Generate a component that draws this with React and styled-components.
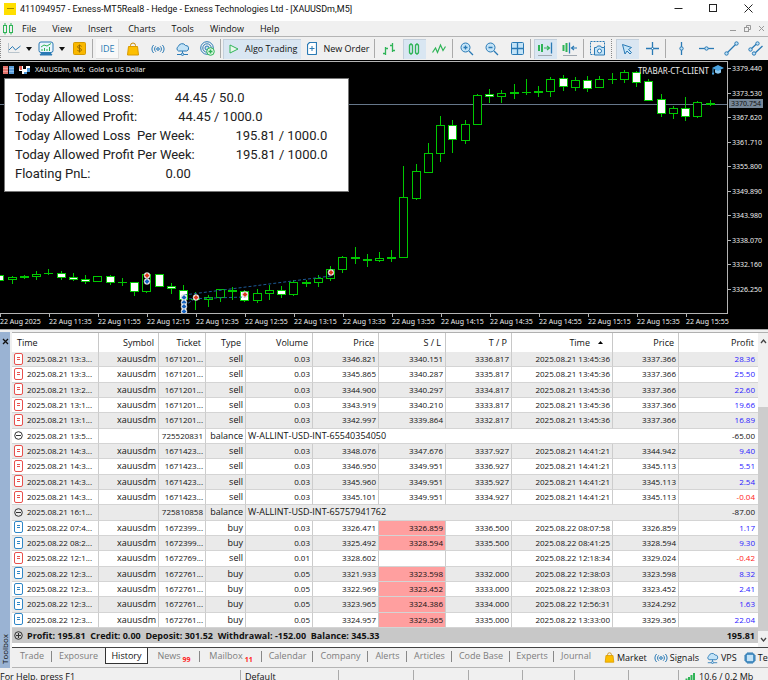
import styled, { createGlobalStyle, css } from "styled-components";

const BLUE = "#2a7ab5";
const LIGHT = "#c3e3f7";
const GREEN = "#2fb457";

const menus = ["File", "View", "Insert", "Charts", "Tools", "Window", "Help"];

// wick top, body top, body bottom, wick bottom, w = filled / g = hollow
const candles = [
  [275, 275, 280, 280, "w"],
  [276, 277, 279, 283, "g"],
  [275, 276, 277, 278, "g"],
  [271, 274, 276, 279, "g"],
  [269, 273, 273, 274, "g"],
  [271, 273, 277, 279, "w"],
  [273, 277, 279, 280, "w"],
  [275, 279, 281, 283, "w"],
  [276, 276, 281, 281, "g"],
  [275, 276, 282, 284, "w"],
  [278, 282, 282, 285, "g"],
  [282, 282, 291, 295, "w"],
  [274, 274, 291, 292, "g"],
  [274, 274, 286, 286, "w"],
  [283, 286, 288, 293, "w"],
  [285, 290, 299, 299, "w"],
  [292, 299, 299, 309, "g"],
  [295, 297, 299, 306, "g"],
  [289, 289, 297, 301, "g"],
  [287, 290, 291, 299, "w"],
  [290, 291, 300, 301, "w"],
  [289, 293, 300, 302, "g"],
  [285, 290, 293, 299, "g"],
  [286, 290, 294, 297, "w"],
  [280, 282, 294, 295, "g"],
  [280, 282, 283, 286, "g"],
  [275, 278, 282, 286, "g"],
  [266, 269, 278, 280, "g"],
  [256, 257, 269, 272, "g"],
  [247, 257, 258, 263, "w"],
  [254, 259, 260, 266, "w"],
  [252, 258, 260, 261, "g"],
  [250, 257, 258, 261, "g"],
  [166, 197, 257, 257, "g"],
  [164, 171, 198, 199, "g"],
  [143, 153, 172, 172, "g"],
  [116, 125, 153, 161, "g"],
  [120, 125, 139, 152, "w"],
  [120, 124, 140, 143, "g"],
  [94, 95, 124, 124, "g"],
  [89, 94, 96, 102, "w"],
  [90, 93, 96, 102, "g"],
  [84, 92, 93, 98, "g"],
  [79, 92, 92, 94, "g"],
  [86, 91, 92, 96, "g"],
  [77, 79, 91, 96, "g"],
  [75, 78, 86, 90, "w"],
  [77, 80, 87, 90, "g"],
  [76, 80, 88, 91, "w"],
  [76, 79, 87, 87, "g"],
  [73, 79, 79, 83, "g"],
  [70, 72, 79, 82, "g"],
  [71, 72, 82, 86, "w"],
  [79, 81, 100, 100, "w"],
  [94, 99, 113, 116, "w"],
  [106, 108, 113, 118, "g"],
  [97, 108, 116, 120, "w"],
  [101, 102, 116, 117, "g"],
  [100, 103, 104, 105, "w"],
];

const trades = [
  [147, 275, "#d8381c"],
  [147, 281, "#1560bd"],
  [184, 297, "#1560bd"],
  [184, 302, "#1560bd"],
  [184, 306, "#1560bd"],
  [184, 311, "#1560bd"],
  [196, 297, "#d8381c"],
  [245, 294, "#d8381c"],
  [331, 272, "#d8381c"],
];

const prices = [
  "3379.440",
  "3373.530",
  "3367.620",
  "3361.710",
  "3355.800",
  "3349.890",
  "3343.980",
  "3338.070",
  "3332.160",
  "3326.250",
];

const times = [
  "2025",
  "11:35",
  "11:55",
  "12:15",
  "12:35",
  "12:55",
  "13:15",
  "13:35",
  "13:55",
  "14:15",
  "14:35",
  "14:55",
  "15:15",
  "15:35",
  "15:55",
];

const limits = [
  ["Today Allowed Loss:", "44.45 / 50.0"],
  ["Today Allowed Profit:", "44.45 / 1000.0"],
  ["Today Allowed Loss\u00a0 Per Week:", "195.81 / 1000.0"],
  ["Today Allowed Profit Per Week:", "195.81 / 1000.0"],
  ["Floating PnL:", "0.00"],
];

const deals = [
  ["2025.08.21 13:3...", "1671201...", "sell", "0.03", "3346.821", "3340.151", "3336.817", "2025.08.21 13:45:36", "3337.366", "28.36"],
  ["2025.08.21 13:3...", "1671201...", "sell", "0.03", "3345.865", "3340.287", "3335.817", "2025.08.21 13:45:36", "3337.366", "25.50"],
  ["2025.08.21 13:2...", "1671201...", "sell", "0.03", "3344.900", "3340.297", "3334.817", "2025.08.21 13:45:36", "3337.366", "22.60"],
  ["2025.08.21 13:1...", "1671201...", "sell", "0.03", "3343.919", "3340.210", "3333.817", "2025.08.21 13:45:36", "3337.366", "19.66"],
  ["2025.08.21 13:1...", "1671201...", "sell", "0.03", "3342.997", "3339.864", "3332.817", "2025.08.21 13:45:36", "3337.366", "16.89"],
  ["2025.08.21 13:5...", "725520831", "balance", "W-ALLINT-USD-INT-65540354050", "-65.00"],
  ["2025.08.21 14:3...", "1671423...", "sell", "0.03", "3348.076", "3347.676", "3337.927", "2025.08.21 14:41:21", "3344.942", "9.40"],
  ["2025.08.21 14:3...", "1671423...", "sell", "0.03", "3346.950", "3349.951", "3336.927", "2025.08.21 14:41:21", "3345.113", "5.51"],
  ["2025.08.21 14:3...", "1671423...", "sell", "0.03", "3345.960", "3349.951", "3335.927", "2025.08.21 14:41:21", "3345.113", "2.54"],
  ["2025.08.21 14:3...", "1671423...", "sell", "0.03", "3345.101", "3349.951", "3334.927", "2025.08.21 14:41:21", "3345.113", "-0.04"],
  ["2025.08.21 16:1...", "725810858", "balance", "W-ALLINT-USD-INT-65757941762", "-87.00"],
  ["2025.08.22 07:4...", "1672399...", "buy", "0.03", "3326.471", "3326.859", "3336.500", "2025.08.22 08:07:58", "3326.859", "1.17"],
  ["2025.08.22 08:2...", "1672399...", "buy", "0.03", "3325.492", "3328.594", "3335.500", "2025.08.22 08:41:25", "3328.594", "9.30"],
  ["2025.08.22 12:1...", "1672769...", "sell", "0.01", "3328.602", "", "", "2025.08.22 12:18:34", "3329.024", "-0.42"],
  ["2025.08.22 12:3...", "1672761...", "buy", "0.05", "3321.933", "3323.598", "3332.000", "2025.08.22 12:38:03", "3323.598", "8.32"],
  ["2025.08.22 12:3...", "1672761...", "buy", "0.05", "3322.969", "3323.452", "3333.000", "2025.08.22 12:38:03", "3323.452", "2.41"],
  ["2025.08.22 12:3...", "1672761...", "buy", "0.05", "3323.965", "3324.386", "3334.000", "2025.08.22 12:56:31", "3324.292", "1.63"],
  ["2025.08.22 12:3...", "1672761...", "buy", "0.05", "3324.957", "3329.365", "3335.000", "2025.08.22 13:33:00", "3329.365", "22.04"],
];

const columns = [
  ["Time", 87],
  ["Symbol", 60],
  ["Ticket", 47],
  ["Type", 40],
  ["Volume", 67],
  ["Price", 66],
  ["S / L", 67],
  ["T / P", 66],
  ["Time", 101],
  ["Price", 66],
  ["Profit", 79],
];

const tabs = [
  ["Trade"],
  ["Exposure"],
  ["History"],
  ["News", "99"],
  ["Mailbox", "11"],
  ["Calendar"],
  ["Company"],
  ["Alerts"],
  ["Articles"],
  ["Code Base"],
  ["Experts"],
  ["Journal"],
];

function Icon({ w = 16, h = 16, children, ...rest }) {
  return (
    <svg
      width={w}
      height={h}
      viewBox={`0 0 ${w} ${h}`}
      fill="none"
      stroke={BLUE}
      strokeWidth="1"
      aria-hidden="true"
      {...rest}
    >
      {children}
    </svg>
  );
}

const CandlesIcon = () => (
  <Icon w={12} h={14} stroke={GREEN}>
    <rect x="1.500" y="3.500" width="3" height="7" />
    <rect x="7.500" y="3.500" width="3" height="7" />
    <path d="M3 1v2.500M3 10.500v2M9 1v2.500M9 10.500v2" />
  </Icon>
);

const BagIcon = ({ size = 14 }) => (
  <svg width={size} height={size} viewBox="0 0 14 14" fill="none" aria-hidden="true">
    <path d="M4.500 6V3.500a2.500 2.500 0 0 1 5 0V6" stroke="#c98a00" />
    <path d="M2.500 4.500h9l1 8.500h-11z" fill="#fdbf00" stroke="#d99a00" />
  </svg>
);

const SignalIcon = () => (
  <Icon w={14} h={12}>
    <circle cx="7" cy="6" r="1.300" fill={LIGHT} />
    <path d="M4.800 3.300a3.600 3.600 0 0 0 0 5.400M9.200 3.300a3.600 3.600 0 0 1 0 5.400M2.600 2a5.600 5.600 0 0 0 0 8M11.400 2a5.600 5.600 0 0 1 0 8" />
  </Icon>
);

const CloudIcon = ({ w = 15, h = 14 }) => (
  <svg width={w} height={h} viewBox="0 0 15 14" fill="none" stroke={BLUE} aria-hidden="true">
    <path d="M3.500 9A2.500 2.500 0 0 1 3.300 4.500 4 4 0 0 1 10.500 3.500 2.800 2.800 0 0 1 11.500 9z" fill={LIGHT} />
    <path d="M7.500 9v2M2 12.500h4M9 12.500h4" />
    <circle cx="7.500" cy="12.300" r="1.200" fill={LIGHT} />
  </svg>
);

const ChipIcon = () => (
  <Icon w={12} h={12}>
    <path d="M4 0v12M6 0v12M8 0v12M0 4h12M0 6h12M0 8h12" />
    <rect x="2" y="2" width="8" height="8" rx="1" fill={LIGHT} strokeWidth="1.500" />
  </Icon>
);

const DocIcon = ({ color }) => (
  <svg width="9" height="13" viewBox="0 0 9 13" fill="#fff" stroke={color} aria-hidden="true">
    <rect x="0.500" y="0.500" width="8" height="11" rx="1.500" />
    <path d="M3 4.500h3M3 6.500h3" />
  </svg>
);

const RoundIcon = ({ plus }) => (
  <svg width="9" height="9" viewBox="0 0 9 9" fill="none" stroke="#333" aria-hidden="true">
    <circle cx="4.500" cy="4.500" r="3.800" />
    <path d={plus ? "M2 4.500h5M4.500 2v5" : "M2 4.500h5"} />
  </svg>
);

const Caret = () => (
  <svg width="6" height="4" viewBox="0 0 6 4" aria-hidden="true">
    <path d="M0 0h6L3 4z" fill="#111" />
  </svg>
);

function Candle({ x, wickTop, top, bottom, wickBottom, filled }) {
  return (
    <g stroke="#00c800" shapeRendering="crispEdges">
      <path d={`M${x + 0.5} ${wickTop}V${wickBottom + 1}`} />
      {top === bottom ? (
        <path d={`M${x - 4} ${top + 0.5}h9`} />
      ) : (
        <rect
          x={x - 3.5}
          y={top + 0.5}
          width="8"
          height={bottom - top}
          fill={filled ? "#fff" : "#000"}
        />
      )}
    </g>
  );
}

function Chart() {
  return (
    <ChartBox>
      <Plot>
        <PlotDrawing viewBox="0 62 727 251" preserveAspectRatio="xMaxYMin slice">
          <path d="M0 104.500h727" stroke="#66778a" />
          {candles.map(([wickTop, top, bottom, wickBottom, kind], i) => (
            <Candle
              key={i}
              x={Math.round(i * 12.245 - 0.6)}
              wickTop={wickTop}
              top={top}
              bottom={bottom}
              wickBottom={wickBottom}
              filled={kind === "w"}
            />
          ))}
          <g stroke="#1d5a96" strokeDasharray="3 2" fill="none">
            <path d="M184 295L331 276M184 299L245 297M184 306L196 298" />
          </g>
          {trades.map(([x, y, color], i) => (
            <g key={i}>
              <circle cx={x} cy={y + 0.5} r="3" fill="#fff" stroke="#bbb" strokeWidth="0.500" />
              <path d={`M${x} ${y - 2}l2.500 2.500-2.500 2.500-2.500-2.500z`} fill={color} />
            </g>
          ))}
        </PlotDrawing>
        <ChartTitle>
          <svg width="11" height="8" viewBox="0 0 11 8" aria-hidden="true">
            <path d="M0 0h5v8H0z" fill="#f0a09a" />
            <path d="M6 0h5v8H6z" fill="#8cc0ee" />
            <path d="M0 1h5M0 4h5M0 7h5" stroke="#d8453c" />
            <path d="M6 1h5M6 4h5M6 7h5" stroke="#2f7fc8" />
          </svg>
          <svg width="11" height="8" viewBox="0 0 11 8" aria-hidden="true">
            <path d="M0 0h4v3h3V0h4v5H8v3H3V5H0z" fill="#fff" />
            <path d="M0 0h3v4H1z" fill="#e05a50" />
            <path d="M8 2h3v4H8v2H5V6h3z" fill="#4a96d8" />
          </svg>
          <span>XAUUSDm, M5:&nbsp; Gold vs US Dollar</span>
        </ChartTitle>
        <Expert>
          TRABAR-CT-CLIENT
          <svg width="12" height="10" viewBox="0 0 12 10" aria-hidden="true">
            <path d="M3 4.500v3c1.500 1.500 4.500 1.500 6 0v-3z" fill="#8cc8f0" />
            <path d="M6 0l6 3-6 3-6-3z" fill="#4aa3e0" />
            <path d="M1 3.500v4" stroke="#4aa3e0" />
            <circle cx="1" cy="8.500" r="1.200" fill="#4aa3e0" />
          </svg>
        </Expert>
        <Limits>
          {limits.map(([label, value]) => (
            <Limit key={label} $wide={value === "0.00"}>
              <dt>{label}</dt>
              <dd>{value}</dd>
            </Limit>
          ))}
        </Limits>
      </Plot>
      <PriceAxis>
        {prices.map((p) => (
          <Price key={p}>{p}</Price>
        ))}
        <CurrentPrice>3370.754</CurrentPrice>
      </PriceAxis>
      <TimeAxis>
        {times.map((t) => (
          <Tick key={t}>22 Aug {t}</Tick>
        ))}
      </TimeAxis>
    </ChartBox>
  );
}

function DealRow({ deal }) {
  const [opened, ticket, type] = deal;
  const profit = deal[deal.length - 1];
  const balance = type === "balance";
  const middle = balance ? [] : deal.slice(3, 9);

  return (
    <Row>
      <Cell $first>
        <Opened>
          {balance ? <RoundIcon /> : <DocIcon color={type === "buy" ? "#2f86c6" : "#e8504c"} />}
          {opened}
        </Opened>
      </Cell>
      <Cell $text>{balance ? "" : "xauusdm"}</Cell>
      <Cell>{ticket}</Cell>
      <Cell $text>{type}</Cell>
      {balance && (
        <Cell $note colSpan={6}>
          {deal[3]}
        </Cell>
      )}
      {middle.map((value, i) => (
        <Cell key={i} $hit={i === 2 && type === "buy"}>
          {value}
        </Cell>
      ))}
      <Cell $last $color={balance ? "#111" : profit.startsWith("-") ? "#ff1a1a" : "#2a20ff"}>
        {profit}
      </Cell>
    </Row>
  );
}

export default function App() {
  return (
    <Terminal>
      <GlobalStyle />
      <TitleBar>
        <Logo>
          <i />
        </Logo>
        <Title>411094957 - Exness-MT5Real8 - Hedge - Exness Technologies Ltd - [XAUUSDm,M5]</Title>
        <WindowButton aria-label="Minimize">
          <Icon w={9} h={9} stroke="#222">
            <path d="M0.500 4.500h8" />
          </Icon>
        </WindowButton>
        <WindowButton aria-label="Maximize">
          <Icon w={9} h={9} stroke="#222">
            <rect x="0.500" y="0.500" width="7" height="7" />
          </Icon>
        </WindowButton>
        <WindowButton aria-label="Close">
          <Icon w={9} h={9} stroke="#222">
            <path d="M0.500 0.500l8 8M8.500 0.500l-8 8" />
          </Icon>
        </WindowButton>
      </TitleBar>

      <MenuBar>
        <CandlesIcon />
        <Menus>
          {menus.map((m) => (
            <Menu key={m}>{m}</Menu>
          ))}
        </Menus>
        <ChildButton aria-label="Minimize chart">
          <Icon w={7} h={7} stroke="#999">
            <path d="M0 5.500h6" />
          </Icon>
        </ChildButton>
        <ChildButton aria-label="Restore chart">
          <Icon w={7} h={7} stroke="#999">
            <rect x="0.500" y="2.500" width="4" height="4" />
            <path d="M2.500 2V0.500h4v4H5" />
          </Icon>
        </ChildButton>
        <ChildButton aria-label="Close chart">
          <Icon w={7} h={7} stroke="#999">
            <path d="M1 1l5 5M6 1l-5 5" />
          </Icon>
        </ChildButton>
      </MenuBar>

      <ToolBar>
        <Divider $dotted />
        <Tool $drop aria-label="Chart type">
          <Icon w={14} h={12}>
            <path d="M1.500 0v9.500h11" stroke="#b9c4cc" />
            <path d="M2 7l3.500-3.500 3 3.500 5-4" />
          </Icon>
          <Caret />
        </Tool>
        <Tool $drop aria-label="Indicators">
          <Icon w={16} h={15}>
            <rect x="1" y="1" width="14" height="10.500" rx="2" fill="#eaf5fc" />
            <path d="M3 12.500h10l1 1.500H2z" fill={BLUE} />
            <path d="M3 6l3-2 3 1 4-2.500" stroke={GREEN} />
            <path d="M4 10V8M6.500 10V7M9 10V8M11.500 10V6" stroke={GREEN} />
          </Icon>
          <Caret />
        </Tool>
        <Tool aria-label="Depth of market">
          <svg width="13" height="13" viewBox="0 0 13 13" fill="none" aria-hidden="true">
            <rect x="0.500" y="0.500" width="12" height="12" rx="1" fill="#f9b800" stroke="#d59a00" />
            <path d="M8.500 4.500c0-1-4-1.500-4 .4s4 1 4 3-4 1.500-4 .1M6.500 2.500v8" stroke="#9a6c00" />
          </svg>
        </Tool>
        <Divider />
        <Tool $raised>IDE</Tool>
        <Tool aria-label="Market">
          <BagIcon />
        </Tool>
        <Tool aria-label="Signals">
          <SignalIcon />
        </Tool>
        <Tool aria-label="VPS">
          <CloudIcon />
        </Tool>
        <Tool aria-label="Copy trading">
          <Icon w={15} h={15}>
            <circle cx="7" cy="7" r="6.300" />
            <circle cx="7" cy="7" r="4.200" />
            <circle cx="7" cy="7" r="2" fill={LIGHT} />
            <circle cx="10.500" cy="10.500" r="3.800" fill="#dff5e3" stroke={GREEN} />
            <path d="M10.500 8.500v4M8.500 10.500h4" stroke={GREEN} strokeWidth="1.400" />
          </Icon>
        </Tool>
        <Divider />
        <LabelTool $active>
          <Icon w={10} h={10} stroke={GREEN}>
            <path d="M1 1l8 4-8 4z" fill="#e8f8ec" />
          </Icon>
          Algo Trading
        </LabelTool>
        <LabelTool>
          <Icon w={10} h={13}>
            <path d="M2.500 0.500h7v11a1 1 0 0 1-1 1h-7a1 1 0 0 1-1-1v-9z" fill="#fff" strokeWidth="1.200" />
            <path d="M5 4v5M2.500 6.500h5" />
          </Icon>
          New Order
        </LabelTool>
        <Divider />
        <Tool aria-label="Bar chart">
          <Icon w={14} h={14} stroke={GREEN}>
            <path d="M3.500 5v8M1 11.500h2.500M3.500 6.500H6M10.500 1v9M8 3.500h2.500M10.500 8.500H13" strokeWidth="1.300" />
          </Icon>
        </Tool>
        <Tool $active aria-label="Candlesticks">
          <Icon w={12} h={14} stroke={GREEN}>
            <rect x="1.500" y="2.500" width="3" height="9" rx="1" strokeWidth="1.300" />
            <rect x="7.500" y="2.500" width="3" height="9" rx="1" strokeWidth="1.300" />
            <path d="M3 1v1.500M3 11.500V13M9 1v1.500M9 11.500V13" />
          </Icon>
        </Tool>
        <Tool aria-label="Line chart">
          <Icon w={14} h={12} stroke={GREEN}>
            <path d="M0.500 9.500l3-4.500 2 4.500L8.500 2l2.500 5.500 2.500-4" strokeWidth="1.200" />
          </Icon>
        </Tool>
        <Divider />
        <Tool aria-label="Zoom in">
          <Icon w={14} h={14}>
            <circle cx="5.500" cy="5.500" r="4.500" fill={LIGHT} />
            <path d="M9 9l4 4M3.500 5.500h4M5.500 3.500v4" strokeWidth="1.300" />
          </Icon>
        </Tool>
        <Tool aria-label="Zoom out">
          <Icon w={14} h={14}>
            <circle cx="5.500" cy="5.500" r="4.500" fill={LIGHT} />
            <path d="M9 9l4 4M3.500 5.500h4" strokeWidth="1.300" />
          </Icon>
        </Tool>
        <Tool aria-label="Tile windows">
          <Icon w={13} h={13}>
            <rect x="0.500" y="0.500" width="12" height="12" rx="1" fill={LIGHT} />
            <path d="M6.500 0.500v12M0.500 6.500h12" strokeWidth="1.300" />
          </Icon>
        </Tool>
        <Divider />
        <Tool $active aria-label="Auto scroll">
          <Icon w={16} h={14}>
            <path d="M2 3v6M5 2v8" stroke={GREEN} strokeWidth="2" />
            <path d="M7 6h5M10 4l2.500 2L10 8" stroke={GREEN} strokeWidth="1.200" />
            <path d="M14.500 0.500v11" strokeWidth="1.300" />
            <path d="M1 13.500h14" stroke="#a0a8b0" />
          </Icon>
        </Tool>
        <Tool aria-label="Chart shift">
          <Icon w={16} h={14}>
            <path d="M1.500 3v6M4.500 1v9" stroke={GREEN} strokeWidth="2" />
            <path d="M7.500 0.500v11" strokeWidth="1.300" />
            <path d="M10 6h5M12 4L9.500 6 12 8" strokeWidth="1.200" />
            <path d="M1 13.500h14" stroke="#a0a8b0" />
          </Icon>
        </Tool>
        <Divider />
        <Tool aria-label="Screenshot">
          <Icon w={16} h={15}>
            <rect x="0.500" y="0.500" width="14" height="13" strokeDasharray="2 1" />
            <path d="M4.500 6.500h2l1-1.500h3l1 1.500h3v7.500h-10z" fill={LIGHT} />
            <circle cx="9.500" cy="10" r="2" fill="#fff" />
          </Icon>
        </Tool>
        <Divider $dotted $wide />
        <Tool $active aria-label="Cursor">
          <Icon w={12} h={12}>
            <path d="M1.500 1.500l9 3-3 2 3 3-1.500 1.500-3-3-2 3z" fill={LIGHT} />
          </Icon>
        </Tool>
        <Tool aria-label="Crosshair">
          <Icon w={13} h={13}>
            <path d="M6.500 0v13M0 6.500h13" strokeWidth="1.300" />
            <circle cx="6.500" cy="6.500" r="1" fill="#fff" />
          </Icon>
        </Tool>
        <Divider $wide />
        <Tool aria-label="Vertical line">
          <Icon w={13} h={13}>
            <path d="M6.500 0v13" strokeWidth="1.300" />
            <circle cx="6.500" cy="6.500" r="1.700" fill={LIGHT} />
          </Icon>
        </Tool>
        <Tool aria-label="Horizontal line">
          <Icon w={15} h={13}>
            <path d="M0 6.500h15" strokeWidth="1.300" />
            <circle cx="7.500" cy="6.500" r="1.700" fill={LIGHT} />
          </Icon>
        </Tool>
        <Tool aria-label="Trend line">
          <Icon w={15} h={15}>
            <path d="M3 12L12 3" strokeWidth="1.300" />
            <circle cx="2.500" cy="12.500" r="1.700" fill={LIGHT} />
            <circle cx="12.500" cy="2.500" r="1.700" fill={LIGHT} />
          </Icon>
        </Tool>
        <Tool aria-label="Channel">
          <Icon w={16} h={15}>
            <path d="M2.500 8.500l7-6.500M6 13l8.500-8" strokeWidth="1.300" />
            <circle cx="2.500" cy="8.500" r="1.700" fill={LIGHT} />
            <circle cx="9.500" cy="2.500" r="1.700" fill={LIGHT} />
            <circle cx="6" cy="12.500" r="1.700" fill={LIGHT} />
          </Icon>
        </Tool>
      </ToolBar>

      <Chart />

      <Toolbox>
        <Strip>
          <StripClose aria-label="Close toolbox">
            <Icon w={7} h={7} stroke="#111">
              <path d="M1 1l5 5M6 1l-5 5" strokeWidth="1.300" />
            </Icon>
          </StripClose>
          <StripName>Toolbox</StripName>
        </Strip>
        <Panel>
          <History>
            <Deals>
              <colgroup>
                {columns.map(([, width], i) => (
                  <col key={i} width={width} />
                ))}
              </colgroup>
              <thead>
                <tr>
                  {columns.map(([name], i) => (
                    <Head key={i} scope="col" $first={i === 0}>
                      {name}
                      {i === 8 && (
                        <Sorted width="5" height="3" viewBox="0 0 5 3" aria-hidden="true">
                          <path d="M2.500 0L5 3H0z" />
                        </Sorted>
                      )}
                    </Head>
                  ))}
                </tr>
              </thead>
              <tbody>
                {deals.map((deal, i) => (
                  <DealRow key={i} deal={deal} />
                ))}
              </tbody>
              <tfoot>
                <tr>
                  <Total colSpan={10}>
                    <Opened>
                      <RoundIcon plus />
                      Profit: 195.81&nbsp; Credit: 0.00&nbsp; Deposit: 301.52&nbsp; Withdrawal: -152.00&nbsp; Balance: 345.33
                    </Opened>
                  </Total>
                  <Total $end>195.81</Total>
                </tr>
              </tfoot>
            </Deals>
            <Scroll>
              <ScrollButton aria-label="Scroll up">
                <Icon w={7} h={5} stroke="#444">
                  <path d="M1 4l2.500-3L6 4" strokeWidth="1.300" />
                </Icon>
              </ScrollButton>
              <Thumb />
              <ScrollButton aria-label="Scroll down">
                <Icon w={7} h={5} stroke="#444">
                  <path d="M1 1l2.500 3L6 1" strokeWidth="1.300" />
                </Icon>
              </ScrollButton>
            </Scroll>
          </History>
          <Tabs>
            {tabs.map(([name, count]) => (
              <Tab key={name} $active={name === "History"} $plain={name === "Exposure" || name === "Journal"}>
                {name}
                {count && <Count>{count}</Count>}
              </Tab>
            ))}
            <Services>
              <Service href="#market">
                <BagIcon size={11} />
                Market
              </Service>
              <Service href="#signals">
                <SignalIcon />
                Signals
              </Service>
              <Service href="#vps">
                <CloudIcon w={13} h={12} />
                VPS
              </Service>
              <Service href="#tester">
                <ChipIcon />
                Tester
              </Service>
            </Services>
          </Tabs>
        </Panel>
      </Toolbox>

      <StatusBar>
        <Status>For Help, press F1</Status>
        <Status>Default</Status>
        <Status />
        <Status />
        <Status />
        <Status />
        <Status />
        <Status />
        <Status>
          <svg width="12" height="9" viewBox="0 0 12 9" aria-hidden="true">
            <path d="M1 9V7M3.500 9V5.500M6 9V4M8.500 9V2M11 9V0" stroke={GREEN} strokeWidth="2" />
          </svg>
          10.6 / 0.2 Mb
        </Status>
      </StatusBar>
    </Terminal>
  );
}

const GlobalStyle = createGlobalStyle`
  * {
    box-sizing: border-box;
  }
  body {
    margin: 0;
    overflow: hidden;
    background: #f0f0f0;
  }
  button {
    font: inherit;
    color: inherit;
    padding: 0;
    border: 0;
    background: none;
  }
  svg {
    flex: none;
  }
`;

const Terminal = styled.div`
  display: flex;
  flex-direction: column;
  height: 100vh;
  overflow: hidden;
  font-family: "Open Sans", "Noto Sans", sans-serif;
  font-size: 9px;
  line-height: 12px;
  color: #111;
  white-space: nowrap;
`;

const TitleBar = styled.header`
  flex: none;
  display: flex;
  align-items: center;
  height: 21px;
  padding: 0 2px 4px 4px;
  background: #fff;
`;

const Logo = styled.div`
  display: flex;
  align-items: center;
  justify-content: center;
  width: 12px;
  height: 12px;
  margin-right: 4px;
  background: #ffdf00;

  i {
    width: 7px;
    height: 1px;
    background: #a08800;
  }
`;

const Title = styled.h1`
  flex: 1;
  margin: 0;
  font-family: Roboto, sans-serif;
  font-size: 9px;
  font-weight: 400;
`;

const WindowButton = styled.button`
  display: flex;
  justify-content: center;
  width: 35px;
  flex: none;
`;

const MenuBar = styled.div`
  flex: none;
  display: flex;
  align-items: center;
  height: 16px;
  padding-left: 2px;
  border-bottom: 1px solid #b4b4b4;
`;

const Menus = styled.nav`
  flex: 1;
  display: flex;
  gap: 16px;
  padding-left: 8px;
`;

const Menu = styled.button``;

const ChildButton = styled.button`
  display: flex;
  justify-content: center;
  width: 14px;
`;

const ToolBar = styled.div`
  flex: none;
  display: flex;
  align-items: center;
  height: 23px;
  overflow: hidden;
`;

const Divider = styled.span`
  flex: none;
  width: ${(p) => (p.$wide ? 4 : 3)}px;
  height: 19px;
  border-left: 1px ${(p) => (p.$dotted ? "dotted #888" : "solid #aaa")};
`;

const active = css`
  background: #d9e6f2;
  box-shadow: inset 1px 1px #c4d0dc;
`;

const Tool = styled.button`
  flex: none;
  display: flex;
  align-items: center;
  justify-content: center;
  gap: 5px;
  width: ${(p) => (p.$drop ? 30 : 23)}px;
  height: 20px;
  margin: 0 1px;
  ${(p) => p.$active && active}
  ${(p) =>
    p.$raised &&
    css`
      color: ${BLUE};
      font-size: 9px;
      background: #f8f8f8;
      box-shadow: inset -1px -1px #ddd;
    `}
`;

const LabelTool = styled.button`
  flex: none;
  display: flex;
  align-items: center;
  gap: 6px;
  height: 20px;
  padding: 0 4px 0 6px;
  ${(p) => p.$active && active}
`;

const ChartBox = styled.section`
  flex: none;
  display: grid;
  grid-template: 253px 15px / 1fr 40px;
  padding-top: 1px;
  background: #000;
  color: #eee;
  border-bottom: 1px solid #aaa;
  font-family: "Noto Sans", "Open Sans", sans-serif;
  font-size: 7px;
  line-height: 9px;
`;

const Plot = styled.div`
  position: relative;
  overflow: hidden;
  border: 1px solid #b4b4b4;
  border-left: 0;
`;

const PlotDrawing = styled.svg`
  display: block;
  width: 100%;
  height: 251px;
`;

const ChartTitle = styled.div`
  position: absolute;
  top: 3px;
  left: 3px;
  display: flex;
  align-items: center;
  gap: 5px;
`;

const Expert = styled.div`
  position: absolute;
  top: 3px;
  right: 3px;
  display: flex;
  align-items: center;
  gap: 3px;
  font-size: 8px;
`;

const Limits = styled.dl`
  position: absolute;
  top: 16px;
  left: 4px;
  width: 345px;
  margin: 0;
  padding: 9px 10px 8px;
  border: 1px solid #777;
  background: #fff;
  color: #222;
  font-family: Roboto, sans-serif;
  font-size: 13px;
  line-height: 19px;
`;

const Limit = styled.div`
  display: flex;
  gap: ${(p) => (p.$wide ? 75 : 41)}px;

  dd {
    margin: 0;
  }
`;

const PriceAxis = styled.div`
  position: relative;
  display: flex;
  flex-direction: column;
  justify-content: space-between;
  padding: 3px 0 20px;
`;

const Price = styled.span`
  display: flex;
  align-items: center;
  gap: 1px;

  &::before {
    content: "";
    width: 3px;
    height: 1px;
    background: #b4b4b4;
  }
`;

const CurrentPrice = styled.span`
  position: absolute;
  top: 38px;
  left: 1px;
  width: 34px;
  padding-left: 2px;
  background: #778899;
  color: #111;
`;

const TimeAxis = styled.div`
  grid-column: 1 / -1;
  display: grid;
  grid-template-columns: repeat(15, 49px);
  overflow: hidden;
`;

const Tick = styled.span`
  padding-top: 3px;
  background: linear-gradient(#b4b4b4, #b4b4b4) no-repeat 0 0 / 1px 3px;
`;

const Toolbox = styled.section`
  flex: none;
  display: flex;
  margin-top: 2px;
`;

const Strip = styled.div`
  flex: none;
  display: flex;
  flex-direction: column;
  align-items: center;
  justify-content: space-between;
  width: 10px;
  margin-right: 2px;
  padding: 6px 0 4px;
  background: #9ab3d3;
`;

const StripClose = styled.button`
  display: flex;
`;

const StripName = styled.span`
  writing-mode: vertical-rl;
  transform: rotate(180deg);
  font-size: 8px;
  line-height: 10px;
`;

const Panel = styled.div`
  flex: 1;
  min-width: 0;
`;

const History = styled.div`
  display: flex;
  height: 316px;
  background: #fff;
  border-top: 1px solid #b0b0b0;
  border-bottom: 1px solid #444;
`;

const Deals = styled.table`
  flex: 1;
  height: 310px;
  table-layout: fixed;
  border-collapse: separate;
  border-spacing: 0;
`;

const Head = styled.th`
  height: 19px;
  padding: ${(p) => (p.$first ? "0 0 0 5px" : "0 4px 0 0")};
  border-right: 1px solid #c8c8c8;
  font-weight: 400;
  text-align: ${(p) => (p.$first ? "left" : "right")};

  &:last-child {
    border-right: 0;
  }
`;

const Sorted = styled.svg`
  margin: 0 5px 2px 8px;
  vertical-align: middle;
`;

const Row = styled.tr`
  height: 15px;

  &:nth-child(odd) {
    background: #eaeaea;
  }
`;

const Cell = styled.td`
  padding: ${(p) => (p.$first || p.$note ? "0 0 0 2px" : "0 2px 0 0")};
  border-right: 1px solid #ccc;
  border-bottom: 1px solid #d4d4d4;
  overflow: hidden;
  font-size: ${(p) => (p.$text || p.$note ? 9 : 8)}px;
  text-align: ${(p) => (p.$first || p.$note ? "left" : "right")};
  ${(p) => p.$color && `color: ${p.$color};`}
  ${(p) => p.$hit && "background: #ff9f9f;"}
  ${(p) => p.$last && "padding-right: 3px; border-right: 0;"}
`;

const Opened = styled.span`
  display: flex;
  align-items: center;
  gap: 4px;
`;

const Total = styled.td`
  height: 15px;
  padding: ${(p) => (p.$end ? "0 3px 0 0" : "0 0 0 2px")};
  background: #c8c8c8;
  font-weight: 700;
  text-align: ${(p) => (p.$end ? "right" : "left")};
`;

const Scroll = styled.div`
  flex: none;
  display: flex;
  flex-direction: column;
  align-items: center;
  width: 10px;
  background: #f0f0f0;
`;

const ScrollButton = styled.button`
  display: flex;
  align-items: center;
  justify-content: center;
  height: 16px;
`;

const Thumb = styled.div`
  flex: 1;
  align-self: stretch;
  margin-top: 58px;
  background: #cdcdcd;
`;

const Tabs = styled.div`
  display: grid;
  grid-template-columns: 40px 53px 43px 52px 62px 51px 55px 39px 45px 58px 44px 44px 1fr;
  height: 20px;
  border-bottom: 1px solid #b4b4b4;
  overflow: hidden;
`;

const Tab = styled.button`
  position: relative;
  align-self: start;
  height: 16px;
  color: #7d7d7d;

  &::after {
    content: "";
    position: absolute;
    right: 0;
    top: 3px;
    width: ${(p) => (p.$active || p.$plain ? 0 : 1)}px;
    height: 11px;
    background: #888;
  }

  ${(p) =>
    p.$active &&
    css`
      background: #fff;
      color: #111;
      border: 1px solid #333;
      border-top: 0;
    `}
`;

const Count = styled.sup`
  position: relative;
  top: 3px;
  margin-left: 2px;
  color: #f22;
  font-size: 7px;
  font-weight: 700;
  line-height: 7px;
  vertical-align: baseline;
`;

const Services = styled.div`
  display: flex;
  align-items: center;
  gap: 7px;
  min-width: 0;
  padding-left: 6px;
`;

const Service = styled.a`
  display: flex;
  align-items: center;
  gap: 2px;
  color: #111;
  text-decoration: none;
`;

const StatusBar = styled.footer`
  display: grid;
  grid-template-columns: 241px 98px 75px 55px 54px 52px 54px 50px 1fr;
  padding-top: 2px;
`;

const Status = styled.span`
  display: flex;
  align-items: center;
  gap: 4px;
  height: 14px;
  padding-left: 4px;
  border-right: 1px solid #aaa;

  &:first-child {
    padding-left: 0;
  }

  &:last-child {
    border-right: 0;
  }
`;
